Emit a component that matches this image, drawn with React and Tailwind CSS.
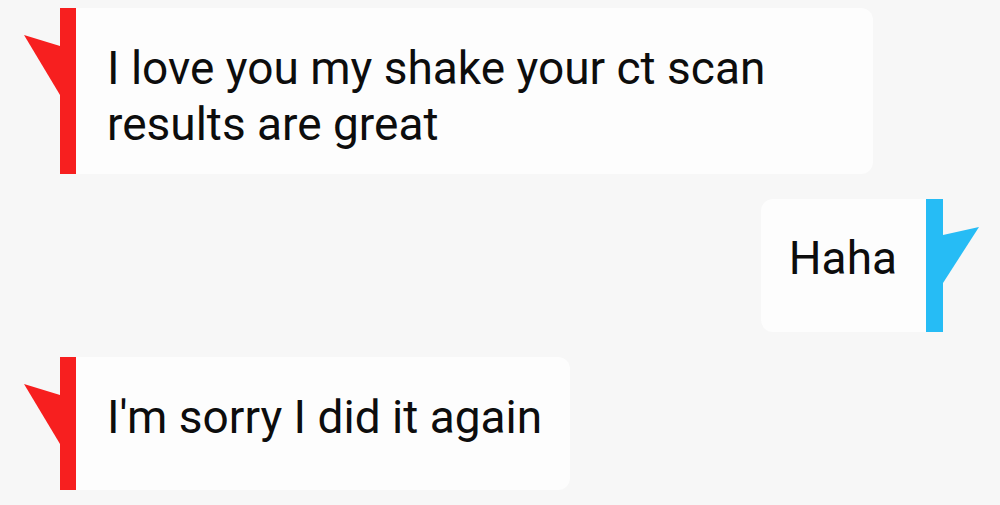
import React from "react";

const messages = [
  { id: 1, side: "left", text: "I love you my shake your ct scan results are great" },
  { id: 2, side: "right", text: "Haha" },
  { id: 3, side: "left", text: "I'm sorry I did it again" },
];

function Flag({ side }) {
  // little pennant that hangs off the coloured bar
  const points = side === "left" ? "0,27 36,38 36,87" : "36,28 0,36 0,84";
  return (
    <svg width="36" height="90" viewBox="0 0 36 90" className="shrink-0">
      <polygon points={points} fill={side === "left" ? "#f71f1f" : "#26bcf5"} />
    </svg>
  );
}

function Bubble({ msg }) {
  const left = msg.side === "left";
  return (
    <div className={left ? "flex items-start pl-[24px]" : "flex items-start justify-end pr-[21px]"}>
      {left && <Flag side="left" />}
      {left && <div className="w-[16px] self-stretch bg-[#f71f1f]" />}
      <div
        className={
          left
            ? "max-w-[797px] min-h-[133px] rounded-r-xl bg-[#fdfdfd] pl-[31px] pr-[28px] pt-[32px] pb-[22px]"
            : "min-h-[133px] rounded-l-xl bg-[#fdfdfd] pl-[28px] pr-[29px] pt-[31px] pb-[22px]"
        }
      >
        <p className="text-[46px] leading-[56px] text-[#0d0d0d]">{msg.text}</p>
      </div>
      {!left && <div className="w-[17px] self-stretch bg-[#26bcf5]" />}
      {!left && <Flag side="right" />}
    </div>
  );
}

export default function App() {
  return (
    <div
      className="w-[1000px] h-[505px] overflow-hidden bg-[#f7f7f7] pt-[8px] flex flex-col gap-[25px]"
      style={{ fontFamily: "Roboto, 'Liberation Sans', sans-serif" }}
    >
      {messages.map((m) => (
        <Bubble key={m.id} msg={m} />
      ))}
    </div>
  );
}
